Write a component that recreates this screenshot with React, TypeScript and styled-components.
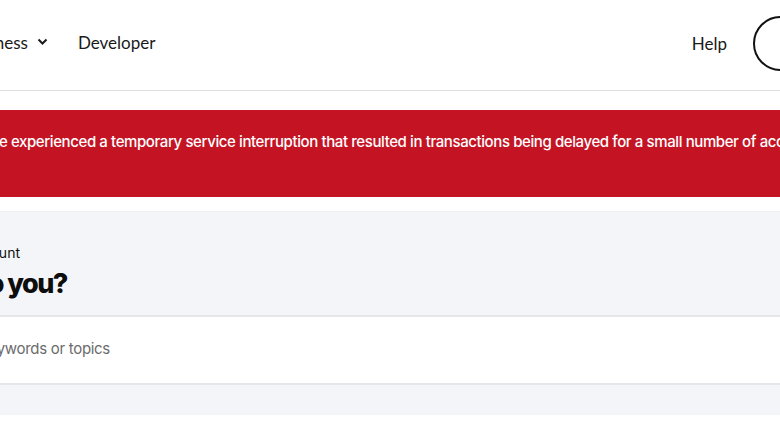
import React from "react";
import styled, { createGlobalStyle } from "styled-components";

const Global = createGlobalStyle`
  html, body { margin: 0; padding: 0; background: #ffffff; }
  body { width: 780px; height: 440px; overflow: hidden; font-family: "Lato", "Liberation Sans", sans-serif; }
  * { box-sizing: border-box; }
`;

const Page = styled.div`
  width: 780px;
  display: flex;
  flex-direction: column;
  overflow: hidden;
`;

const Header = styled.header`
  height: 91px;
  border-bottom: 1px solid #dedede;
  display: flex;
  align-items: center;
  justify-content: space-between;
`;

const Nav = styled.nav`
  display: flex;
  align-items: center;
  gap: 30px;
  margin-left: -37px;
  margin-top: -6px;
`;

const NavItem = styled.span`
  font-family: "Lato", sans-serif;
  font-size: 17px;
  color: #1a1a1a;
  display: flex;
  align-items: center;
  gap: 9px;
  white-space: nowrap;
`;

const Right = styled.div`
  display: flex;
  align-items: center;
  gap: 26px;
  margin-right: -87px;
  margin-top: -4px;
`;

const LoginPill = styled.div`
  width: 114px;
  height: 55px;
  border: 2.5px solid #111;
  border-radius: 28px;
`;

const Banner = styled.div`
  margin-top: 19px;
  height: 87px;
  background: #c41424;
  color: #ffffff;
  display: flex;
  align-items: flex-start;
  padding-top: 22px;
  overflow: hidden;
`;

const BannerText = styled.p`
  margin: 0 0 0 -15px;
  font-family: "Inter", sans-serif;
  font-size: 15px;
  font-weight: 500;
  white-space: nowrap;
  letter-spacing: -0.4px;
`;

const Hero = styled.section`
  margin-top: 14px;
  background: #f4f5f9;
  border-top: 1px solid #eeeff2;
  height: 104px;
  padding-top: 32px;
  display: flex;
  flex-direction: column;
  gap: 6px;
`;

/* Right-anchored line: text whose end sits at a fixed x and whose start runs off the left edge */
const EndAnchored = styled.div<{ $end: number }>`
  width: ${(p) => p.$end}px;
  display: flex;
  justify-content: flex-end;
  white-space: nowrap;
`;

const Eyebrow = styled.span`
  font-family: "Inter", sans-serif;
  font-size: 14px;
  color: #111;
`;

const Title = styled.h1`
  margin: 0;
  font-family: "Inter", sans-serif;
  font-weight: 800;
  font-size: 27px;
  line-height: 34px;
  color: #0d0d0d;
  letter-spacing: -1.5px;
`;

const Search = styled.div`
  height: 70px;
  border-top: 2px solid #e6e6ea;
  border-bottom: 2px solid #e6e6ea;
  background: #ffffff;
  display: flex;
  align-items: center;
  padding-bottom: 4px;
`;

const Placeholder = styled.span`
  font-family: "Inter", sans-serif;
  font-size: 15px;
  color: #6b6b6b;
  letter-spacing: -0.3px;
`;

const Footer = styled.div`
  height: 30px;
  background: #f4f5f9;
`;

const Chevron = () => (
  <svg width="11" height="8" viewBox="0 0 11 8" fill="none">
    <path d="M1.5 1.5L5.5 5.5L9.5 1.5" stroke="#1a1a1a" strokeWidth="2" />
  </svg>
);

export default function App() {
  return (
    <>
      <Global />
      <Page>
        <Header>
          <Nav>
            <NavItem>
              Business <Chevron />
            </NavItem>
            <NavItem>Developer</NavItem>
          </Nav>
          <Right>
            <NavItem>Help</NavItem>
            <LoginPill />
          </Right>
        </Header>
        <Banner>
          <BannerText>
            We experienced a temporary service interruption that resulted in transactions being delayed for a small number of accounts.
          </BannerText>
        </Banner>
        <Hero>
          <EndAnchored $end={20}>
            <Eyebrow>Account</Eyebrow>
          </EndAnchored>
          <EndAnchored $end={67}>
            <Title>What's important to you?</Title>
          </EndAnchored>
        </Hero>
        <Search>
          <EndAnchored $end={110}>
            <Placeholder>Search keywords or topics</Placeholder>
          </EndAnchored>
        </Search>
        <Footer />
      </Page>
    </>
  );
}
